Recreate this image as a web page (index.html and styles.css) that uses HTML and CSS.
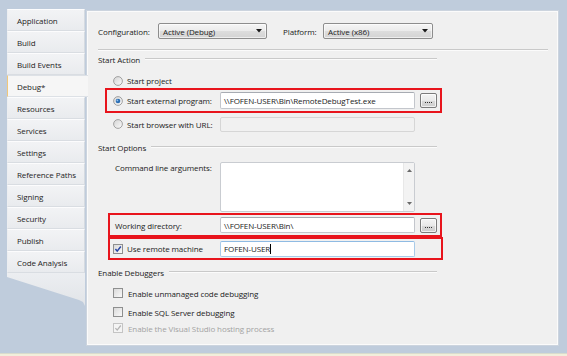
FILE: index.html
```html
<!DOCTYPE html>
<html>
<head>
<meta charset="utf-8">
<link rel="stylesheet" href="styles.css">
</head>
<body>
<div class="window">
  <nav class="tabs">
    <div class="tab">Application</div>
    <div class="tab">Build</div>
    <div class="tab">Build Events</div>
    <div class="tab active">Debug*</div>
    <div class="tab">Resources</div>
    <div class="tab">Services</div>
    <div class="tab">Settings</div>
    <div class="tab">Reference Paths</div>
    <div class="tab">Signing</div>
    <div class="tab">Security</div>
    <div class="tab">Publish</div>
    <div class="tab">Code Analysis</div>
    <div class="tab-foot"></div>
  </nav>

  <main class="panel">
    <div class="config-row">
      <span class="cfg-label">Configuration:</span>
      <div class="combo combo-config"><span>Active (Debug)</span><svg class="arrow" width="6" height="4" viewBox="0 0 6 4"><path d="M0 0h6L3 3.5z" fill="#1a1a1a"/></svg></div>
      <span class="plat-label">Platform:</span>
      <div class="combo combo-plat"><span>Active (x86)</span><svg class="arrow" width="6" height="4" viewBox="0 0 6 4"><path d="M0 0h6L3 3.5z" fill="#1a1a1a"/></svg></div>
    </div>
    <div class="rule"></div>

    <div class="group-head"><span>Start Action</span><i class="line"></i></div>

    <div class="row row-project">
      <svg class="radio" width="10" height="10" viewBox="0 0 10 10"><defs><linearGradient id="rg" x1="0" y1="0" x2="1" y2="1"><stop offset="0" stop-color="#d4d4d4"/><stop offset="1" stop-color="#fbfbfb"/></linearGradient></defs><circle cx="5" cy="5" r="4.4" fill="url(#rg)" stroke="#9a9a9a" stroke-width="0.9"/></svg>
      <span class="opt">Start project</span>
    </div>

    <div class="mark mark-ext">
      <div class="field-row">
        <div class="lead">
          <svg class="radio" width="10" height="10" viewBox="0 0 10 10"><circle cx="5" cy="5" r="4.4" fill="url(#rg)" stroke="#9a9a9a" stroke-width="0.9"/><circle cx="5" cy="5" r="2.3" fill="#2a6db3"/><circle cx="4.4" cy="4.4" r="0.9" fill="#8fc0ec"/></svg>
          <span class="opt">Start external program:</span>
        </div>
        <div class="textbox">\\FOFEN-USER\Bin\RemoteDebugTest.exe</div>
        <div class="browse"><i></i></div>
      </div>
    </div>

    <div class="row row-url">
      <div class="lead">
        <svg class="radio" width="10" height="10" viewBox="0 0 10 10"><circle cx="5" cy="5" r="4.4" fill="url(#rg)" stroke="#9a9a9a" stroke-width="0.9"/></svg>
        <span class="opt">Start browser with URL:</span>
      </div>
      <div class="textbox disabled"></div>
    </div>

    <div class="group-head gh-options"><span>Start Options</span><i class="line"></i></div>

    <div class="cmd-row">
      <span class="cmd-label">Command line arguments:</span>
      <div class="textarea">
        <div class="scroll">
          <svg width="5" height="3" viewBox="0 0 5 3"><path d="M0 3h5L2.5 0z" fill="#6a6a6a"/></svg>
          <svg width="5" height="3" viewBox="0 0 5 3"><path d="M0 0h5L2.5 3z" fill="#6a6a6a"/></svg>
        </div>
      </div>
    </div>

    <div class="mark mark-wd">
      <div class="field-row">
        <span class="wd-label">Working directory:</span>
        <div class="textbox">\\FOFEN-USER\Bin\</div>
        <div class="browse"><i></i></div>
      </div>
    </div>

    <div class="mark mark-remote">
      <div class="field-row">
        <div class="lead lead-remote">
          <svg class="check" width="10" height="10" viewBox="0 0 10 10"><defs><linearGradient id="cg" x1="0" y1="0" x2="1" y2="1"><stop offset="0" stop-color="#d8d8d8"/><stop offset="1" stop-color="#fbfbfb"/></linearGradient></defs><rect x="0.5" y="0.5" width="9" height="9" fill="url(#cg)" stroke="#8e8f8f"/><path d="M2.4 5.1L4.2 7.1L7.8 2.5" fill="none" stroke="#2947a6" stroke-width="1.5"/></svg>
          <span class="opt">Use remote machine</span>
        </div>
        <div class="textbox focused">FOFEN-USER<b class="caret"></b></div>
      </div>
    </div>

    <div class="group-head gh-debug"><span>Enable Debuggers</span><i class="line"></i></div>

    <div class="row chk chk1">
      <svg class="check" width="10" height="10" viewBox="0 0 10 10"><rect x="0.5" y="0.5" width="9" height="9" fill="url(#cg)" stroke="#8e8f8f"/></svg>
      <span class="opt">Enable unmanaged code debugging</span>
    </div>
    <div class="row chk chk2">
      <svg class="check" width="10" height="10" viewBox="0 0 10 10"><rect x="0.5" y="0.5" width="9" height="9" fill="url(#cg)" stroke="#8e8f8f"/></svg>
      <span class="opt">Enable SQL Server debugging</span>
    </div>
    <div class="row chk chk3">
      <svg class="check" width="10" height="10" viewBox="0 0 10 10"><rect x="0.5" y="0.5" width="9" height="9" fill="#f4f4f4" stroke="#c4c4c4"/><path d="M2.4 5.1L4.2 7.1L7.8 2.5" fill="none" stroke="#b4b4b4" stroke-width="1.3"/></svg>
      <span class="opt disabled-text">Enable the Visual Studio hosting process</span>
    </div>
  </main>
</div>
<div class="status"></div>
</body>
</html>
```

FILE: styles.css
```css
* { box-sizing: border-box; }
html, body { margin: 0; padding: 0; }
body {
  width: 567px;
  height: 356px;
  background: #bfccdc;
  font-family: "Open Sans", "Noto Sans", sans-serif;
  font-size: 8px;
  letter-spacing: -0.1px;
  color: #222;
  overflow: hidden;
  display: flex;
  flex-direction: column;
}
.window {
  display: flex;
  align-items: flex-start;
  padding: 9px 0 0 7px;
  height: 353px;
}
.status {
  height: 3px;
  background: #f2eedb;
  border-top: 1px solid #d8dccd;
}

/* sidebar */
.tabs {
  width: 78px;
  display: flex;
  flex-direction: column;
}
.tab {
  height: 22px;
  display: flex;
  align-items: center;
  padding-left: 9px;
  background: linear-gradient(to bottom, #f2f3f5, #e9ebee);
  border-top: 1px solid #fcfcfd;
  border-bottom: 1px solid #d9dde2;
  border-right: 1px solid #d5dae0;
  border-left: 1px solid #eceef1;
  color: #1e1e1e;
}
.tab.active {
  background: #f6f6f6;
  border-left: 1px solid #f0c77a;
  border-right: none;
  border-top: 1px solid #dde1e6;
  border-bottom: 1px solid #dde1e6;
  margin-right: -3px;
  position: relative;
  z-index: 1;
}
.tab-foot {
  height: 33px;
  background: linear-gradient(to bottom, #eceef1, #e1e4e8);
  clip-path: polygon(0 0, 78px 0, 78px 33px, 76px 29px, 72px 27px, 0 4px);
}

/* main panel */
.panel {
  margin: 1px 0 0 1px;
  width: 473px;
  height: 336px;
  background: #f0f0f0;
  border: 1px solid #ccd4de;
  box-shadow: inset 0 0 0 1px #fbfbfb;
  padding: 12px 10px 0 11px;
  display: flex;
  flex-direction: column;
}
.config-row {
  display: flex;
  align-items: center;
  height: 16px;
}
.cfg-label { width: 60px; }
.plat-label { width: 40px; margin-left: 16px; }
.combo {
  height: 16px;
  border: 1px solid #8d8d8d;
  border-radius: 2px;
  background: linear-gradient(to bottom, #f5f5f5 0%, #ebebeb 50%, #dddddd 51%, #d3d3d3 100%);
  box-shadow: inset 0 0 0 1px rgba(255,255,255,0.6);
  display: flex;
  align-items: center;
  justify-content: space-between;
  padding: 0 4px 0 4px;
}
.combo-config { width: 109px; }
.combo-plat { width: 110px; }
.arrow { display: block; }

.rule {
  margin-top: 10px;
  height: 2px;
  width: 450px;
  border-top: 1px solid #c9c9c9;
  border-bottom: 1px solid #fbfbfb;
}

.group-head {
  margin-top: 1px;
  height: 14px;
  width: 339px;
  display: flex;
  align-items: center;
}
.group-head .line {
  flex: 1;
  height: 2px;
  margin-left: 5px;
  border-top: 1px solid #c9c9c9;
  border-bottom: 1px solid #fbfbfb;
}
.gh-options { margin-top: 5px; }
.gh-debug { margin-top: 5px; }

.row {
  display: flex;
  align-items: center;
  padding-left: 15px;
}
.radio, .check { display: block; flex: none; }
.opt { margin-left: 4px; white-space: nowrap; }
.row-project { margin-top: 7px; height: 15px; }

.mark {
  border: 2px solid #e8141c;
  display: flex;
  align-items: center;
}
.mark-ext { margin-left: 7px; width: 337px; height: 25px; padding-left: 6px; }
.mark-wd { margin-left: 10px; width: 334px; height: 24px; padding-left: 5px; margin-top: 1px; }
.mark-remote { margin-left: 10px; width: 335px; height: 23px; padding-left: 3px; }

.field-row { display: flex; align-items: center; }
.lead { display: flex; align-items: center; width: 107px; flex: none; }
.lead-remote { width: 107px; }
.wd-label { width: 105px; flex: none; }

.textbox {
  width: 195px;
  height: 16px;
  background: #fff;
  border: 1px solid #c3c6cc;
  border-top-color: #a7abb2;
  border-radius: 2px;
  display: flex;
  align-items: center;
  padding-left: 3px;
  white-space: nowrap;
}
.mark-ext .textbox { height: 17px; }
.textbox.disabled {
  background: #f1f1f1;
  border-color: #d6d6d6;
  height: 15px;
}
.textbox.focused {
  border-color: #a9cbe9;
  border-top-color: #8fbbe3;
}
.caret {
  display: inline-block;
  width: 1px;
  height: 10px;
  background: #000;
}
.row-url { height: 22px; }

.browse {
  margin-left: 5px;
  width: 17px;
  height: 15px;
  border: 1px solid #7b7b7b;
  border-radius: 2px;
  background: linear-gradient(to bottom, #f4f4f4 0%, #e9e9e9 50%, #d9d9d9 51%, #cdcdcd 100%);
  box-shadow: inset 0 0 0 1px rgba(255,255,255,0.7);
  display: flex;
  align-items: center;
  justify-content: center;
}
.browse i {
  display: block;
  width: 7px;
  height: 1px;
  margin-top: 4px;
  border-top: 1px dotted #333;
}

.cmd-row {
  margin-top: 8px;
  display: flex;
  padding-left: 17px;
  height: 50px;
}
.cmd-label { width: 105px; flex: none; margin-top: 0; line-height: 12px; }
.textarea {
  width: 195px;
  height: 50px;
  background: #fff;
  border: 1px solid #c9ccd1;
  border-radius: 2px;
  display: flex;
  justify-content: flex-end;
}
.scroll {
  width: 11px;
  background: #f3f3f3;
  border-left: 1px solid #e8e8e8;
  display: flex;
  flex-direction: column;
  align-items: center;
  justify-content: space-between;
  padding: 6px 0 6px;
}
.scroll svg { display: block; }

.chk { height: 16px; }
.chk1 { margin-top: 6px; }
.chk2 { margin-top: 3px; }
.chk .opt { margin-left: 5px; }
.disabled-text { color: #a3a3a3; }
```
